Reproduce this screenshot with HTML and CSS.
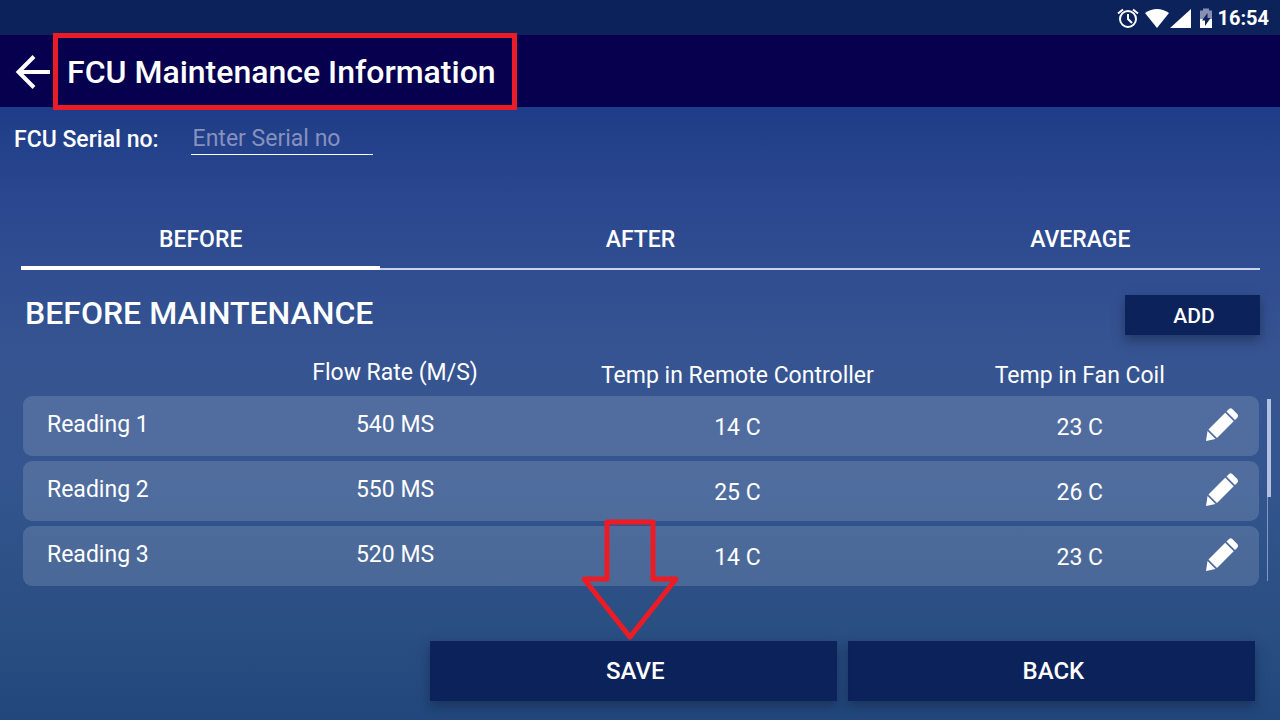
FILE: index.html
```html
<!DOCTYPE html>
<html lang="en">
<head>
<meta charset="utf-8">
<meta name="viewport" content="width=device-width, initial-scale=1">
<title>FCU Maintenance Information</title>
<link rel="stylesheet" href="styles.css">
</head>
<body>
<svg class="symbols" aria-hidden="true">
  <symbol id="pencil" viewBox="0 0 36 36">
    <path fill="#fff" d="M24.800 3.200Q26.500 1.500 28.300 3L33.500 8.200Q34.800 10 33.300 11.700L31 14L22.500 5.500ZM21.200 6.800L29.700 15.300L13 32L4.500 23.500ZM3.500 25L11.500 33L2 35Z"/>
  </symbol>
</svg>
<div class="screen">
  <div class="status-bar">
    <svg class="status-icons" width="100" height="24" viewBox="0 0 100 24" aria-hidden="true">
      <g fill="none" stroke="#fff" stroke-width="2">
        <circle cx="12" cy="13" r="8"/>
        <path d="M12 8V13L16 17M2 7.500L7 3.500M17 3.500L22 7.500"/>
      </g>
      <path fill="#fff" d="M29 7Q41 -1 53 7L41 22Z"/>
      <path fill="#fff" d="M54 22L75 3V22Z"/>
      <path fill="#8790b3" d="M84 4.500H87V2.500H93V4.500H96V14H84Z"/>
      <path fill="#fff" d="M84 13H96V22H84Z"/>
      <path fill="#0c225b" d="M91.500 7L86 14.500H89V20L94.500 12H91.500Z"/>
    </svg>
    <time class="clock">16:54</time>
  </div>
  <header class="app-bar">
    <button class="nav-back" type="button" aria-label="Go back">
      <svg width="36" height="36" viewBox="0 0 36 36" aria-hidden="true">
        <path fill="none" stroke="#fff" stroke-width="4" d="M35 18H4M19 2.500L3.500 18L19 33.500"/>
      </svg>
    </button>
    <h1 class="title">FCU Maintenance Information</h1>
  </header>
  <main class="content">
    <div class="serial">
      <label class="serial-label" for="serial">FCU Serial no:</label>
      <input class="serial-input" id="serial" type="text" placeholder="Enter Serial no">
    </div>
    <div class="tabs" role="tablist">
      <button class="tab tab-active" type="button" role="tab" aria-selected="true">BEFORE</button>
      <button class="tab" type="button" role="tab" aria-selected="false">AFTER</button>
      <button class="tab" type="button" role="tab" aria-selected="false">AVERAGE</button>
    </div>
    <div class="section-head">
      <h2 class="section-title">BEFORE MAINTENANCE</h2>
      <button class="button button-add" type="button">ADD</button>
    </div>
    <div class="list">
      <table class="readings">
        <thead>
          <tr>
            <td class="col-name"></td>
            <th class="col-flow" scope="col">Flow Rate (M/S)</th>
            <th class="col-remote" scope="col">Temp in Remote Controller</th>
            <th class="col-fan" scope="col">Temp in Fan Coil</th>
            <td class="col-edit"></td>
          </tr>
        </thead>
        <tbody>
          <tr>
            <th class="col-name" scope="row">Reading 1</th>
            <td class="col-flow">540 MS</td>
            <td>14 C</td>
            <td>23 C</td>
            <td class="col-edit"><button class="edit" type="button" aria-label="Edit Reading 1"><svg width="36" height="36"><use href="#pencil"/></svg></button></td>
          </tr>
          <tr>
            <th class="col-name" scope="row">Reading 2</th>
            <td class="col-flow">550 MS</td>
            <td>25 C</td>
            <td>26 C</td>
            <td class="col-edit"><button class="edit" type="button" aria-label="Edit Reading 2"><svg width="36" height="36"><use href="#pencil"/></svg></button></td>
          </tr>
          <tr>
            <th class="col-name" scope="row">Reading 3</th>
            <td class="col-flow">520 MS</td>
            <td>14 C</td>
            <td>23 C</td>
            <td class="col-edit"><button class="edit" type="button" aria-label="Edit Reading 3"><svg width="36" height="36"><use href="#pencil"/></svg></button></td>
          </tr>
        </tbody>
      </table>
      <div class="scroll-track"><div class="scroll-thumb"></div></div>
    </div>
    <div class="actions">
      <div class="save-slot">
        <svg class="pointer" width="100" height="124" viewBox="0 0 100 124" aria-hidden="true">
          <path fill="none" stroke="#ed1c24" stroke-width="5" stroke-linejoin="round" d="M27 5H73V62H96L50 120L4 62H27Z"/>
        </svg>
        <button class="button button-wide" type="button">SAVE</button>
      </div>
      <button class="button button-wide" type="button">BACK</button>
    </div>
  </main>
</div>
</body>
</html>
```

FILE: styles.css
```css
* {
  box-sizing: border-box;
}

body {
  margin: 0;
  font-family: Roboto, "Liberation Sans", sans-serif;
  color: #fff;
}

button,
input {
  font: inherit;
  color: inherit;
  background: none;
  border: 0;
  padding: 0;
  margin: 0;
}

.symbols {
  display: none;
}

.screen {
  min-height: 100vh;
  display: flex;
  flex-direction: column;
}

.status-bar {
  display: flex;
  justify-content: flex-end;
  align-items: center;
  gap: 1px;
  height: 35px;
  padding-right: 11px;
  background: #0c225b;
}

.clock {
  font-size: 20px;
  font-weight: 700;
}

.app-bar {
  display: flex;
  align-items: stretch;
  height: 72px;
  padding-left: 15px;
  background: #06004f;
}

.nav-back {
  display: flex;
  align-items: center;
  padding-top: 2px;
}

.title {
  position: relative;
  margin: 0 0 0 2px;
  padding: 0 21px 0 14px;
  font-size: 32px;
  font-weight: 500;
  line-height: 74px;
}

.title::after {
  content: "";
  position: absolute;
  inset: -2px 0 -3px;
  border: 5px solid #e91c27;
}

.content {
  flex: 1;
  display: flex;
  flex-direction: column;
  background: linear-gradient(#1f3c88, #2c4990 18%, #365491 40%, #34558f 60%, #2a4f83 84%, #21477c);
}

.serial {
  display: flex;
  align-items: center;
  gap: 32px;
  padding: 16px 14px 0;
}

.serial-label {
  font-size: 23px;
  font-weight: 500;
}

.serial-input {
  width: 182px;
  height: 32px;
  padding: 0 2px;
  border-bottom: 1px solid #fff;
  font-size: 23px;
}

.serial-input::placeholder {
  color: #8791bd;
  opacity: 1;
}

.tabs {
  display: flex;
  justify-content: space-between;
  margin: 55px 20px 0 21px;
  box-shadow: inset 0 -2px #ccd2e8;
}

.tab {
  width: 29%;
  height: 60px;
  padding-top: 2px;
  border-bottom: 4px solid transparent;
  font-size: 23px;
  font-weight: 500;
}

.tab-active {
  border-bottom-color: #fff;
}

.section-head {
  display: flex;
  justify-content: space-between;
  margin: 25px 20px 0 25px;
}

.section-title {
  margin: 0;
  font-size: 32px;
  font-weight: 500;
  line-height: 36px;
}

.button {
  background: #0c225b;
  box-shadow: 0 5px 10px rgba(20, 30, 60, 0.5);
  font-weight: 500;
}

.button-add {
  width: 135px;
  height: 40px;
  padding: 2px 0 0 3px;
  font-size: 21px;
}

.list {
  display: flex;
  gap: 8px;
  margin: 12px 9px 0 23px;
}

.readings {
  flex: 1;
  width: 100%;
  table-layout: fixed;
  border-collapse: separate;
  border-spacing: 0 5px;
  font-size: 23px;
  line-height: 28px;
}

.readings th,
.readings td {
  padding: 3px 0 0;
  font-weight: 400;
  text-align: center;
}

.readings .col-name {
  width: 21.6%;
  padding: 0 0 3px 24px;
  text-align: left;
}

.readings .col-flow {
  width: 17%;
  padding: 0 0 3px;
}

.readings .col-remote {
  width: 38.4%;
}

.readings .col-fan {
  width: 17%;
}

.readings .col-edit {
  width: 6%;
  padding: 3px 0 0 1px;
}

.readings thead th {
  height: 39px;
  padding-top: 9px;
}

.readings thead .col-flow {
  padding: 3px 0 0;
}

.readings tbody td,
.readings tbody th {
  height: 60px;
  background: rgba(255, 255, 255, 0.14);
}

.readings tbody th {
  border-radius: 9px 0 0 9px;
}

.readings tbody td:last-child {
  border-radius: 0 9px 9px 0;
}

.edit {
  display: inline-flex;
}

.scroll-track {
  width: 4px;
  margin: 52px 0 10px;
  background: linear-gradient(90deg, #8398c3 1px, transparent 1px);
}

.scroll-thumb {
  height: 54%;
  background: #b3c1df;
}

.actions {
  display: flex;
  justify-content: flex-end;
  gap: 11px;
  margin-top: auto;
  padding: 0 25px 19px;
}

.save-slot {
  position: relative;
  display: flex;
  width: 33.1%;
}

.pointer {
  position: absolute;
  bottom: 100%;
  left: 150px;
}

.button-wide {
  width: 33.1%;
  height: 60px;
  padding-left: 4px;
  font-size: 24px;
}

.save-slot .button-wide {
  width: 100%;
}
```
